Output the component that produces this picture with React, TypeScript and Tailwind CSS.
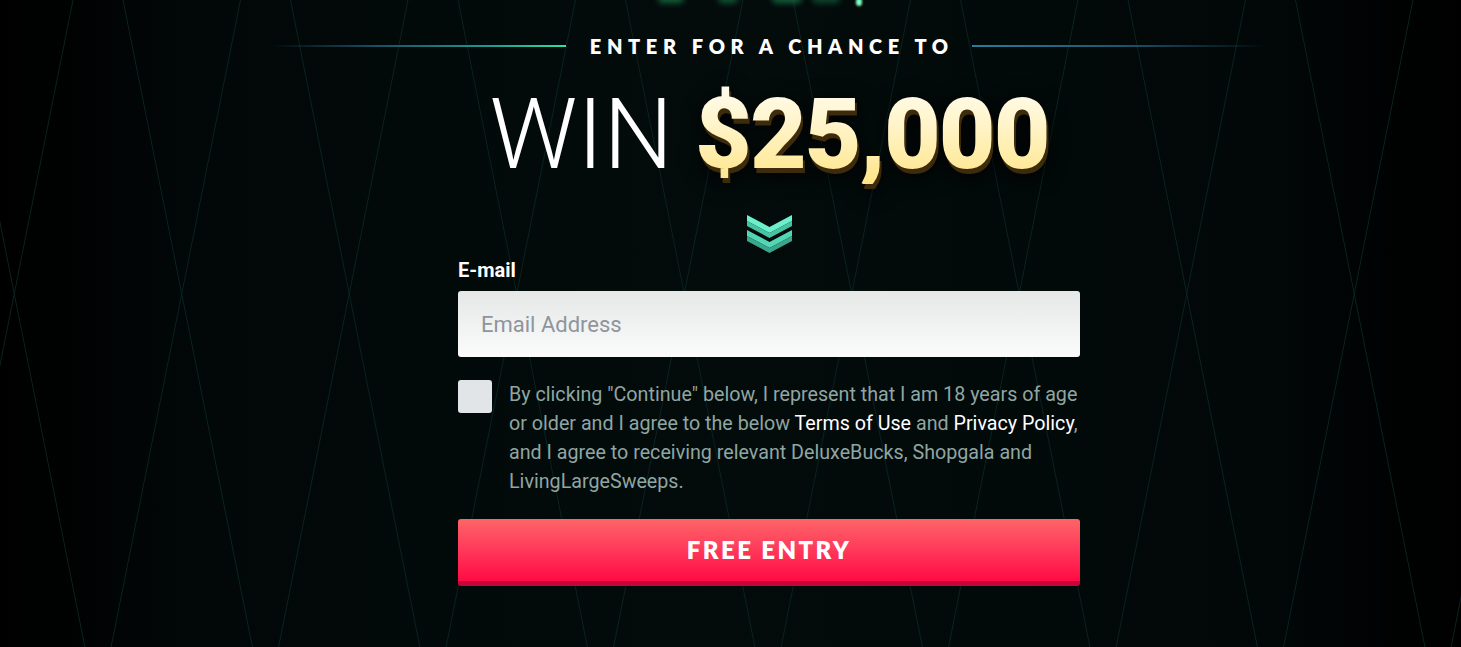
import React from 'react';

const PERIOD = 167.5;
const SLOPE = 0.2;
const H = 647;

function BackgroundLines() {
    const lines: { x1: number; x2: number }[] = [];
    for (let k = -3; k < 11; k++) {
        const a = 123 + PERIOD * k;
        const b = 73 + PERIOD * k;
        lines.push({ x1: a, x2: a + SLOPE * H });
        lines.push({ x1: b, x2: b - SLOPE * H });
    }
    return (
        <svg className="absolute inset-0 w-full h-full pointer-events-none" width="1461" height="647">
            {lines.map((l, i) => (
                <line key={i} x1={l.x1} y1={0} x2={l.x2} y2={H} stroke="#092320" strokeWidth="1" />
            ))}
        </svg>
    );
}

function Chevrons() {
    return (
        <svg width="45" height="38" viewBox="0 0 45 38">
            <polygon points="0,0 22.5,12 45,0 45,6 22.5,18 0,6" fill="#6cf0cb" />
            <polygon points="0,6 22.5,18 45,6 45,11 22.5,23 0,11" fill="#47c3a3" />
            <polygon points="0,15 22.5,27 45,15 45,21 22.5,33 0,21" fill="#52d6b3" />
            <polygon points="0,21 22.5,33 45,21 45,26 22.5,38 0,26" fill="#3aa68c" />
        </svg>
    );
}

export default function App() {
    return (
        <div className="relative w-full h-[647px] overflow-hidden bg-[linear-gradient(to_right,#000_0%,#020808_15%,#030b0b_50%,#020808_85%,#000_100%)] font-['Roboto',sans-serif]">
            <BackgroundLines />

            {/* bottom edge of the logo glow, cut off at the top */}
            <div className="absolute top-0 left-0 w-full h-[10px] pointer-events-none">
                <div className="absolute left-[658px] top-[-6px] w-[26px] h-[9px] rounded-full bg-[#1a8a52] blur-[3px] opacity-70"></div>
                <div className="absolute left-[718px] top-[-6px] w-[20px] h-[9px] rounded-full bg-[#1a8a52] blur-[3px] opacity-60"></div>
                <div className="absolute left-[772px] top-[-6px] w-[30px] h-[9px] rounded-full bg-[#1a8a52] blur-[3px] opacity-70"></div>
                <div className="absolute left-[812px] top-[-6px] w-[28px] h-[9px] rounded-full bg-[#1a8a52] blur-[3px] opacity-50"></div>
                <div className="absolute left-[856px] top-[-2px] w-[6px] h-[8px] rounded-sm bg-[#7dffc0] blur-[1px]"></div>
            </div>

            <div className="relative flex flex-col items-center pt-[36px] pl-[77px]">
                <div className="flex items-center gap-[18px]">
                    <div className="w-[296px] h-[2px] bg-[linear-gradient(to_right,rgba(20,60,80,0)_0%,#1b4d63_35%,#1f9c93_75%,#2de3a3_100%)]"></div>
                    <h2 className="font-['Lato',sans-serif] font-extrabold text-[20px] leading-[20px] tracking-[0.28em] text-white pl-[0.28em]">
                        ENTER FOR A CHANCE TO
                    </h2>
                    <div className="w-[296px] h-[2px] bg-[linear-gradient(to_right,#2a7d9c_0%,#1d5670_50%,rgba(20,60,80,0)_100%)]"></div>
                </div>

                <h1 className="mt-[30px] text-[98px] leading-none flex items-baseline gap-[22px] whitespace-nowrap">
                    <span className="font-light text-white">WIN</span>
                    <span className="font-black tracking-[-0.02em] bg-[linear-gradient(to_bottom,#fffcee_0%,#fff3c4_45%,#ffe587_100%)] bg-clip-text text-transparent [filter:drop-shadow(2px_5px_0_#3e2b0b)_drop-shadow(0_4px_10px_rgba(0,0,0,0.85))]">
                        $25,000
                    </span>
                </h1>

                <div className="mt-[31px]">
                    <Chevrons />
                </div>

                <form className="w-[622px] mt-[7px] flex flex-col" onSubmit={(e) => e.preventDefault()}>
                    <label className="text-white font-bold text-[20px] leading-[20px]">E-mail</label>
                    <input
                        type="email"
                        placeholder="Email Address"
                        className="mt-[11px] h-[66px] w-full rounded-[3px] bg-[linear-gradient(to_bottom,#e5e8e7,#fbfbfb)] px-[23px] text-[22px] text-gray-700 placeholder:text-[#8e959d] outline-none"
                    />

                    <div className="mt-[23px] flex gap-[17px]">
                        <div className="w-[34px] h-[33px] shrink-0 rounded-[3px] bg-[#e1e5e7]"></div>
                        <p className="text-[19.7px] leading-[29px] text-[#8fa6a2]">
                            By clicking "Continue" below, I represent that I am 18 years of age or older and I agree to the below{' '}
                            <span className="text-white">Terms of Use</span> and <span className="text-white">Privacy Policy</span>,
                            and I agree to receiving relevant DeluxeBucks, Shopgala and LivingLargeSweeps.
                        </p>
                    </div>

                    <button
                        type="submit"
                        className="mt-[23px] h-[67px] w-full rounded-[3px] border-b-[5px] border-[#c8043a] bg-[linear-gradient(to_bottom,#fd6567_0%,#ff3d5c_45%,#ff0b45_100%)] font-['Lato',sans-serif] font-extrabold text-[24px] tracking-[0.1em] text-white"
                    >
                        FREE ENTRY
                    </button>
                </form>
            </div>
        </div>
    );
}
